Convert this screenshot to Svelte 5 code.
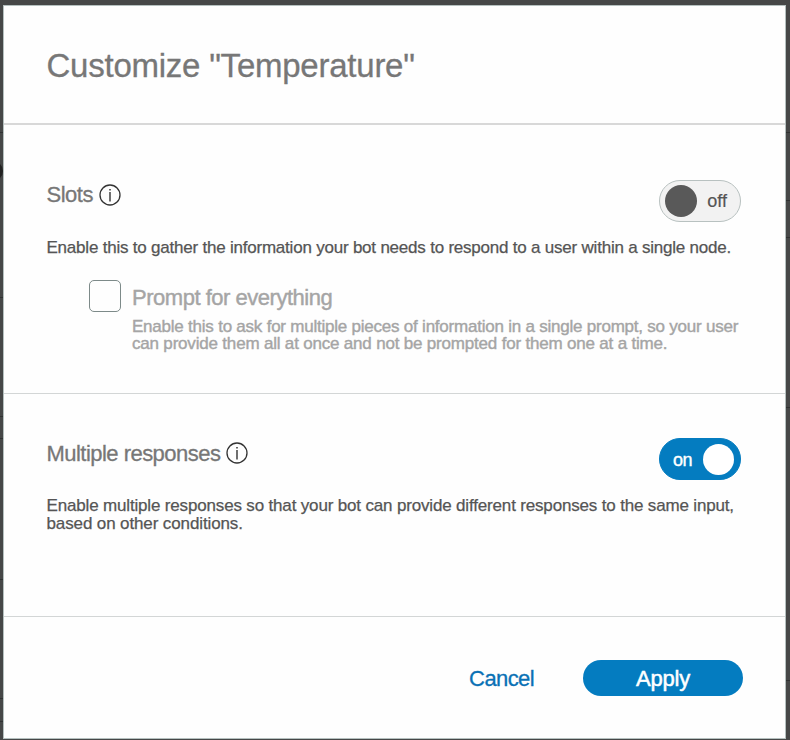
<script>
  let slots = $state(false);
  let multiple = $state(true);
  let prompt = $state(false);
</script>

{#snippet info()}
  <svg class="info" width="22" height="22" viewBox="0 0 22 22" aria-hidden="true">
    <circle cx="11" cy="11" r="10" fill="none" stroke="#333" stroke-width="1.3" />
    <path d="M11 8V17.5" stroke="#333" stroke-width="1.4" />
    <path d="M11 5V6.5" stroke="#333" stroke-width="1.5" />
  </svg>
{/snippet}

<div class="backdrop">
  <i class="blob"></i>
  {#each [132, 297, 416, 438, 579, 698, 721] as y}
    <i class="rule left" style:top="{y}px"></i>
  {/each}
  {#each [132, 200, 237, 407, 680] as y}
    <i class="rule right" style:top="{y}px"></i>
  {/each}
  <div class="modal">
    <header><h1>Customize "Temperature"</h1></header>
    <section class="slots">
      <div class="row">
        <h2><span>Slots</span>{@render info()}</h2>
        <button class="toggle" class:on={slots} onclick={() => (slots = !slots)}>
          <span class="knob"></span><span class="state">{slots ? 'on' : 'off'}</span>
        </button>
      </div>
      <p class="d1">Enable this to gather the information your bot needs to respond to a user within a single node.</p>
      <div class="option">
        <button class="box" aria-label="Prompt for everything" aria-pressed={prompt} onclick={() => (prompt = !prompt)}></button>
        <div>
          <h3>Prompt for everything</h3>
          <div class="hint">
            <p class="hint-first">Enable this to ask for multiple pieces of information in a single prompt, so your user</p>
            <p class="hint-second">can provide them all at once and not be prompted for them one at a time.</p>
          </div>
        </div>
      </div>
    </section>
    <section class="multi">
      <div class="row">
        <h2><span>Multiple responses</span>{@render info()}</h2>
        <button class="toggle" class:on={multiple} onclick={() => (multiple = !multiple)}>
          <span class="knob"></span><span class="state">{multiple ? 'on' : 'off'}</span>
        </button>
      </div>
      <p class="d2">Enable multiple responses so that your bot can provide different responses to the same input,<br /><span class="d2-end">based on other conditions.</span></p>
    </section>
    <footer>
      <button class="cancel">Cancel</button>
      <button class="apply">Apply</button>
    </footer>
  </div>
</div>

<style>
  :global(body) { margin: 0; }
  .backdrop {
    position: relative;
    box-sizing: border-box;
    width: 790px;
    height: 740px;
    padding: 5px 4px 1px 3px;
    background: #464747;
    font-family: "Liberation Sans", Arial, sans-serif;
    overflow: hidden;
  }
  .rule { position: absolute; width: 4px; height: 1px; background: #303232; }
  .left { left: 0; width: 3px; }
  .right { right: 0; }
  .blob { position: absolute; left: -17px; top: 161px; width: 20px; height: 20px; border-radius: 50%; background: #222; }
  .modal {
    position: relative;
    box-sizing: border-box;
    width: 783px;
    height: 734px;
    border: 1px solid #b5c0bf;
    background: #fefefe;
    display: flex;
    flex-direction: column;
  }
  h1, h2, h3, p { margin: 0; font-weight: 400; white-space: nowrap; }
  button { font: inherit; border: 0; padding: 0; background: none; cursor: pointer; }
  header { box-sizing: border-box; height: 119px; padding: 41px 0 0 42.5px; border-bottom: 2px solid #d8d8d8; }
  h1 { font-size: 33px; line-height: 38px; color: #777; -webkit-text-stroke: 0.3px #777; letter-spacing: -0.24px; }
  section { box-sizing: border-box; padding: 55px 44px 0 42.5px; border-bottom: 1px solid #d3d6d6; }
  .slots { height: 269px; }
  .multi { height: 223px; padding-top: 44px; }
  .slots, .multi, header { flex: none; }
  .row { display: flex; justify-content: space-between; height: 42px; }
  h2 { display: flex; align-items: flex-start; gap: 6px; font-size: 22px; line-height: 26px; color: #777; -webkit-text-stroke: 0.3px #777; padding-top: 2px; letter-spacing: -0.5px; }
  .multi h2 { padding-top: 3px; letter-spacing: -0.53px; }
  .info { display: block; margin-top: 1.5px; }
  .multi .info { margin-top: 1px; }
  .toggle {
    box-sizing: border-box;
    width: 82px;
    height: 42px;
    border: 1px solid #b8c1c0;
    border-radius: 21px;
    background: #f2f2f2;
    display: flex;
    align-items: center;
    padding: 0 13px 0 5px;
    justify-content: space-between;
    font-size: 18px;
    color: #555;
    -webkit-text-stroke: 0.2px #555;
  }
  .knob { width: 32px; height: 32px; border-radius: 50%; background: #595959; }
  .state { padding-top: 1px; letter-spacing: 0; }
  .toggle.on { flex-direction: row-reverse; border-color: #047cc0; background: #047cc0; color: #fff; padding: 0 6px 0 13px; -webkit-text-stroke: 0.4px #fff; }
  .on .knob { width: 31px; height: 31px; background: #fff; }
  .on .state { padding-top: 3px; letter-spacing: -0.6px; }
  p { font-size: 17px; line-height: 18px; color: #555; -webkit-text-stroke: 0.25px #555; }
  .d1 { margin-top: 17px; letter-spacing: -0.215px; }
  .d2 { margin-top: 17px; letter-spacing: -0.165px; }
  .d2-end { letter-spacing: -0.12px; }
  .option { display: flex; gap: 11px; margin: 23px 0 0 42.5px; }
  .box { box-sizing: border-box; flex: none; width: 32px; height: 32px; border: 1px solid #7d8a89; border-radius: 5px; }
  h3 { font-size: 22px; line-height: 26px; color: #a5a5a5; -webkit-text-stroke: 0.4px #a5a5a5; margin-top: 5px; letter-spacing: -0.48px; }
  .hint { margin-top: 7px; }
  .hint p { line-height: 17px; color: #a5a5a5; -webkit-text-stroke: 0.4px #a5a5a5; }
  .hint-first { letter-spacing: -0.225px; }
  .hint-second { letter-spacing: -0.19px; }
  footer { display: flex; justify-content: flex-end; align-items: center; gap: 49px; height: 124px; padding-right: 42px; font-size: 22px; }
  .cancel { color: #0a71b5; -webkit-text-stroke: 0.3px #0a71b5; letter-spacing: -0.6px; padding-top: 3px; }
  .apply { width: 160px; height: 36px; border-radius: 18px; background: #047cc0; color: #fff; -webkit-text-stroke: 0.5px #fff; letter-spacing: -0.2px; padding-top: 2px; }
</style>
